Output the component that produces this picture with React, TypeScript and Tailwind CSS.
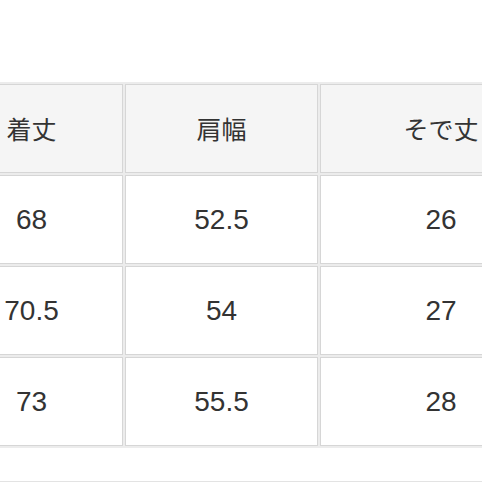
const headers = ["着丈", "肩幅", "そで丈"];

const rows = [
  ["68", "52.5", "26"],
  ["70.5", "54", "27"],
  ["73", "55.5", "28"],
];

const colWidths = ["w-[183px]", "w-[193px]", "w-[242px]"];

export default function App() {
  return (
    <div
      className="w-[482px] h-[482px] overflow-hidden bg-white pt-[82px] text-[#333]"
      style={{ fontFamily: '"Liberation Sans", "Noto Sans CJK JP", sans-serif' }}
    >
      {/* size table, wider than the screen and cut on both sides */}
      <table className="ml-[-62px] w-[626px] min-w-[626px] border-separate border-spacing-[2px] table-fixed bg-[#ececec]">
        <thead>
          <tr>
            {headers.map((h, i) => (
              <th
                key={h}
                className={`${colWidths[i]} h-[89px] border border-[#d6d6d6] bg-[#f5f5f5] text-center align-middle text-[25px] font-normal`}
                style={{ fontFamily: '"Noto Sans CJK JP", sans-serif' }}
              >
                {h}
              </th>
            ))}
          </tr>
        </thead>
        <tbody>
          {rows.map((r, ri) => (
            <tr key={ri}>
              {r.map((v, ci) => (
                <td
                  key={ci}
                  className={`${colWidths[ci]} h-[89px] border border-[#d6d6d6] bg-white text-center align-middle text-[28px]`}
                >
                  {v}
                </td>
              ))}
            </tr>
          ))}
        </tbody>
      </table>
      <div className="mt-[33px] h-px w-full bg-[#e3e3e3]" />
    </div>
  );
}
